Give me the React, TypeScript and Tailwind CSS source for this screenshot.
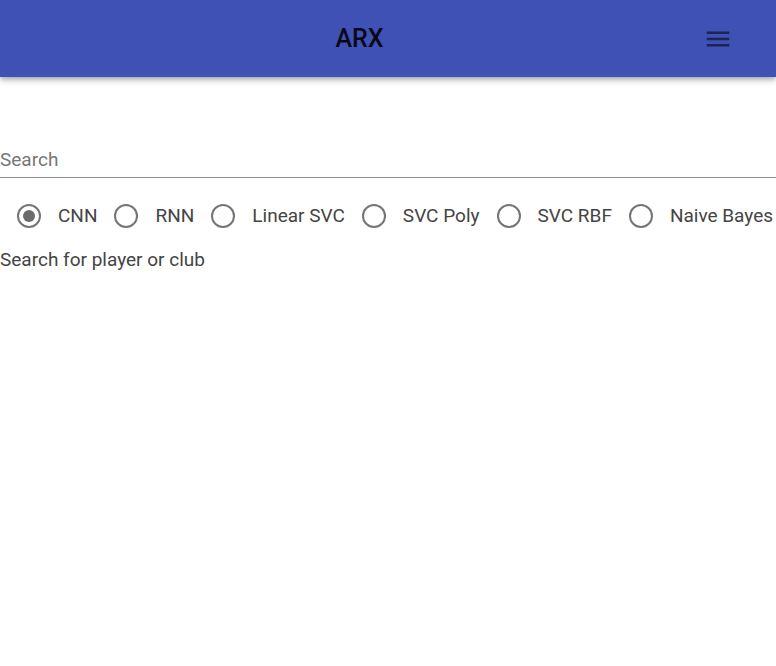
import { useState } from "react";

const models = ["CNN", "RNN", "Linear SVC", "SVC Poly", "SVC RBF", "Naive Bayes"];

function MenuIcon() {
  return (
    <svg viewBox="0 0 24 24" className="h-[30px] w-[30px]" fill="currentColor">
      <path d="M3 18h18v-2H3v2zm0-5h18v-2H3v2zm0-7v2h18V6H3z" />
    </svg>
  );
}

function Radio({ checked }: { checked: boolean }) {
  return (
    <span className="flex h-[24px] w-[24px] items-center justify-center rounded-full border-[2.5px] border-[#757575]">
      {checked && <span className="h-[12px] w-[12px] rounded-full bg-[#6b6b6b]" />}
    </span>
  );
}

export default function App() {
  const [model, setModel] = useState("CNN");
  const [query, setQuery] = useState("");

  return (
    <div className="min-h-screen bg-white font-['Roboto',sans-serif]">
      {/* App bar */}
      <header className="flex h-[77px] items-center bg-[#3f51b5] pl-4 pr-[43px] shadow-[0_2px_4px_-1px_rgba(0,0,0,0.2),0_4px_5px_0_rgba(0,0,0,0.14),0_1px_10px_0_rgba(0,0,0,0.12)]">
        <h1 className="flex-1 text-center text-[25px] font-medium text-black/90">ARX</h1>
        <button className="text-black/55">
          <MenuIcon />
        </button>
      </header>

      <main>
        <div className="mt-[63px] flex h-[38px] items-center border-b border-[#8f8f8f] pt-1">
          <input
            value={query}
            onChange={(e) => setQuery(e.target.value)}
            placeholder="Search"
            className="w-full bg-transparent text-[19px] text-[#444] outline-none placeholder:text-[#777]"
          />
        </div>

        <div className="mt-[17px] flex h-[42px] flex-nowrap items-center gap-[17px] pl-[17px] whitespace-nowrap">
          {models.map((m) => (
            <label
              key={m}
              onClick={() => setModel(m)}
              className="flex cursor-pointer items-center gap-[17px] text-[19px] text-[#444]"
            >
              <Radio checked={model === m} />
              <span>{m}</span>
            </label>
          ))}
        </div>

        <p className="mt-[11px] text-[19px] leading-6 text-[#444]">Search for player or club</p>
      </main>
    </div>
  );
}
